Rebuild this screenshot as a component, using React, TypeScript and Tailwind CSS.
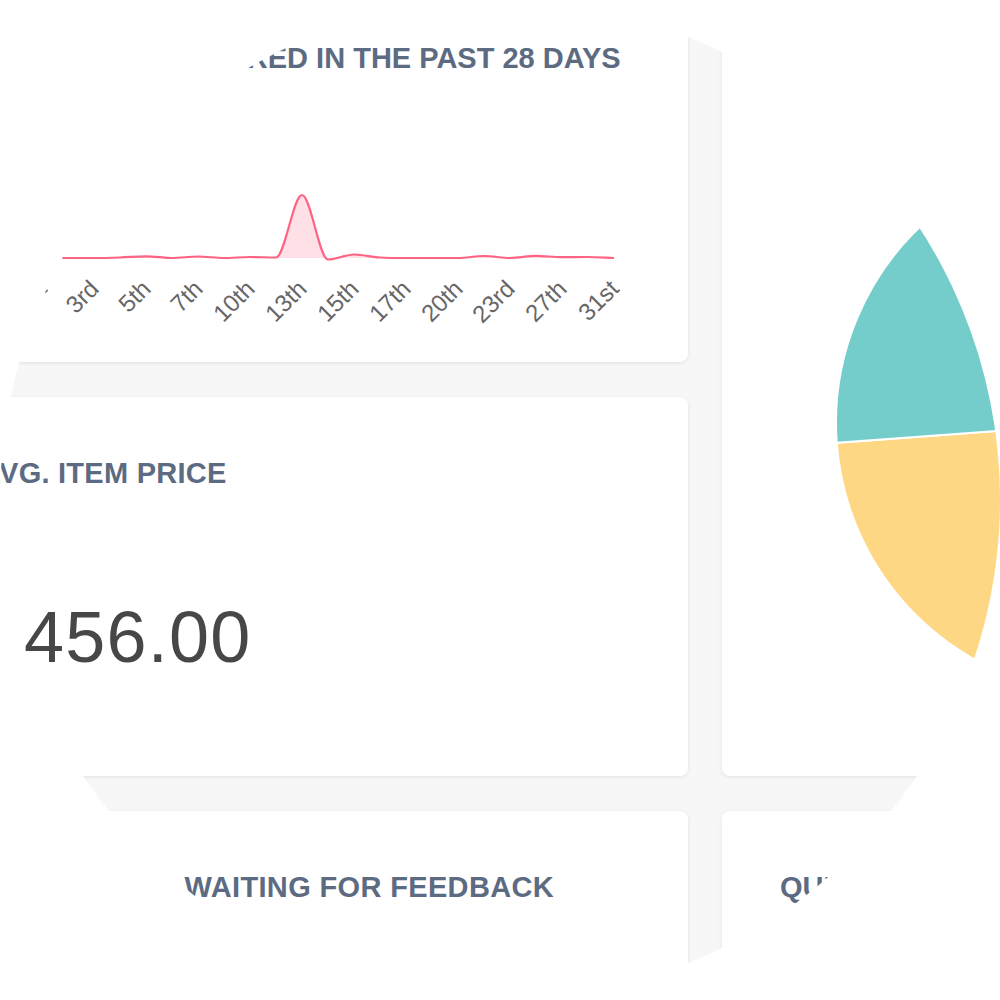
import React from "react"

// Screen-space numbers below come from the dashboard grid:
// left column -77..688, right column 722..1500, rows -18..362, 397..776, 811..1211

type Pt = [number, number]

const chartLeft = -77 // screen x of the svg's left edge
const chartTop = 100 // screen y of the svg's top edge

const labels = [
  "1st", "2nd", "3rd", "4th", "5th", "6th", "7th", "9th", "10th", "12th", "13th", "14th",
  "15th", "16th", "17th", "19th", "20th", "22nd", "23rd", "25th", "27th", "29th", "31st",
]

// screen y of each point (258 = zero line)
const values = [
  258, 258, 258, 257.5, 256.3, 258, 256.5, 258, 257, 257.5, 195, 259.5, 254.5, 257.5, 258, 258, 258,
  256, 258, 255.8, 257.2, 257, 258,
]

const points: Pt[] = values.map((y, i) => [42 + 26 * i - chartLeft, y - chartTop])

// monotone cubic (no overshoot), like chart.js cubicInterpolationMode: "monotone"
function monotonePath(pts: Pt[]) {
  const n = pts.length
  const m: number[] = []
  for (let i = 0; i < n - 1; i++) m.push((pts[i + 1][1] - pts[i][1]) / (pts[i + 1][0] - pts[i][0]))
  const t: number[] = pts.map((_, i) => {
    if (i === 0) return m[0]
    if (i === n - 1) return m[n - 2]
    return m[i - 1] * m[i] <= 0 ? 0 : (m[i - 1] + m[i]) / 2
  })
  for (let i = 0; i < n - 1; i++) {
    if (m[i] === 0) {
      t[i] = 0
      t[i + 1] = 0
      continue
    }
    const a = t[i] / m[i]
    const b = t[i + 1] / m[i]
    const s = a * a + b * b
    if (s > 9) {
      const tau = 3 / Math.sqrt(s)
      t[i] = tau * a * m[i]
      t[i + 1] = tau * b * m[i]
    }
  }
  let d = `M${pts[0][0]},${pts[0][1]}`
  for (let i = 0; i < n - 1; i++) {
    const dx = (pts[i + 1][0] - pts[i][0]) / 3
    d += ` C${pts[i][0] + dx},${pts[i][1] + t[i] * dx} ${pts[i + 1][0] - dx},${pts[i + 1][1] - t[i + 1] * dx} ${pts[i + 1][0]},${pts[i + 1][1]}`
  }
  return d
}

const linePath = monotonePath(points)
const base = 258 - chartTop
const fillPath = `${linePath} L${points[points.length - 1][0]},${base} L${points[0][0]},${base} Z`

function slice(cx: number, cy: number, r: number, a0: number, a1: number) {
  const rad = (a: number) => (a * Math.PI) / 180
  const x0 = cx + r * Math.cos(rad(a0))
  const y0 = cy + r * Math.sin(rad(a0))
  const x1 = cx + r * Math.cos(rad(a1))
  const y1 = cy + r * Math.sin(rad(a1))
  const large = a1 - a0 > 180 ? 1 : 0
  return `M${cx},${cy} L${x0},${y0} A${r},${r} 0 ${large} 1 ${x1},${y1} Z`
}

const pieSlices = [
  { from: 100, to: 175.8, color: "#fdd783" },
  { from: 175.8, to: 290, color: "#75cdcb" },
  { from: 290, to: 380, color: "#ff9fb3" },
  { from: 380, to: 460, color: "#8cc8f0" },
]

const titleClass =
  "text-[29px] leading-[29px] font-bold uppercase text-[#5d6b82] whitespace-nowrap"

const Card = ({ className = "", children }: { className?: string; children?: React.ReactNode }) => (
  <div
    className={`overflow-hidden rounded-lg bg-white shadow-[0_1px_4px_rgba(0,0,0,0.09)] ${className}`}
  >
    {children}
  </div>
)

export default function App() {
  return (
    <div className="h-[1000px] w-[1000px] bg-white font-['Liberation_Sans',Arial,sans-serif]">
      <div className="h-[1000px] w-[1000px] overflow-hidden rounded-full bg-[#f7f7f7]">
        <div className="-ml-[77px] -mt-[18px] grid w-[1577px] grid-cols-[765px_778px] grid-rows-[380px_379px_400px] gap-x-[34px] gap-y-[35px]">
          {/* Products ordered chart */}
          <Card className="col-start-1 row-start-1">
            <div className={`pl-[2px] pt-[62px] text-center ${titleClass}`}>
              Products ordered in the past 28 days
            </div>
            <svg width={765} height={250} className="mt-[27px] block">
              <path d={fillPath} fill="rgba(255,99,132,0.2)" />
              <path d={linePath} fill="none" stroke="#ff6384" strokeWidth={2.2} />
              {labels.map((label, i) =>
                i % 2 === 0 ? (
                  <text
                    key={label}
                    x={0}
                    y={0}
                    transform={`translate(${42 + 26 * i - chartLeft - 6},${278 - chartTop}) rotate(-45)`}
                    textAnchor="end"
                    dy="0.72em"
                    fontSize={24}
                    fill="#666666"
                    fontFamily="'Liberation Sans', Arial, sans-serif"
                  >
                    {label}
                  </text>
                ) : null
              )}
            </svg>
          </Card>

          {/* Orders by status pie */}
          <Card className="col-start-2 row-span-2 row-start-1">
            <div className={`pl-[58px] pt-[62px] ${titleClass}`}>Orders by status</div>
            <svg width={778} height={650} className="mt-[27px] block">
              {pieSlices.map((s) => (
                <path
                  key={s.from}
                  d={slice(385, 323, 271, s.from, s.to)}
                  fill={s.color}
                  stroke="#ffffff"
                  strokeWidth={2}
                />
              ))}
            </svg>
          </Card>

          {/* Avg item price */}
          <Card className="col-start-1 row-start-2">
            <div className={`pl-[57px] pt-[62px] tracking-[0.25px] ${titleClass}`}>Avg. item price</div>
            <div className="mt-[113px] pl-[101px] text-[72px] leading-[72px] tracking-[1.2px] text-[#474747]">
              456.00
            </div>
          </Card>

          {/* Waiting for feedback */}
          <Card className="col-start-1 row-start-3">
            <div className={`pl-[127px] pt-[62px] tracking-[0.35px] ${titleClass}`}>
              Orders waiting for feedback
            </div>
          </Card>

          <Card className="col-start-2 row-start-3">
            <div className={`pl-[58px] pt-[62px] ${titleClass}`}>Quick stats</div>
          </Card>
        </div>
      </div>
    </div>
  )
}
